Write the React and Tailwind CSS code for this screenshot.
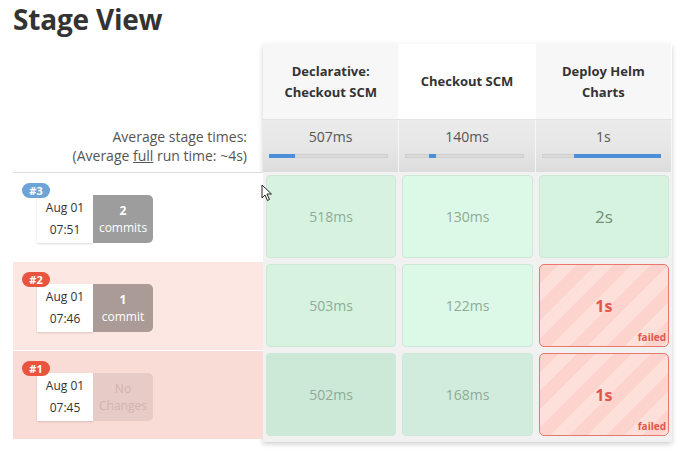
import React from 'react';

const stages = [
  { name: ['Declarative:', 'Checkout SCM'], avg: '507ms', bar: { left: 0, width: 22 }, head: 'bg-[#f7f7f7]' },
  { name: ['Checkout SCM'], avg: '140ms', bar: { left: 20, width: 6 }, head: 'bg-white' },
  { name: ['Deploy Helm', 'Charts'], avg: '1s', bar: { left: 27, width: 73 }, head: 'bg-[#f7f7f7]' },
];

const builds = [
  {
    id: '#3',
    badge: 'bg-[#6da3d6]',
    rowBg: 'bg-white border-t border-[#dcdcdc]',
    date: 'Aug 01',
    time: '07:51',
    commits: ['2', 'commits'],
    commitBox: 'bg-[#9d9d9d] text-white',
    cells: [
      { t: '518ms', cls: 'bg-[#d7f3e0]' },
      { t: '130ms', cls: 'bg-[#dcf8e6]' },
      { t: '2s', cls: 'bg-[#d6f3e0]', big: true },
    ],
  },
  {
    id: '#2',
    badge: 'bg-[#e9543e]',
    rowBg: 'bg-[#fde7e2] border-t border-white',
    date: 'Aug 01',
    time: '07:46',
    commits: ['1', 'commit'],
    commitBox: 'bg-[#ab9b96] text-white',
    cells: [
      { t: '503ms', cls: 'bg-[#d7f3e0]' },
      { t: '122ms', cls: 'bg-[#dcf8e6]' },
      { t: '1s', failed: true },
    ],
  },
  {
    id: '#1',
    badge: 'bg-[#e9543e]',
    rowBg: 'bg-[#fadcd6] border-t border-white',
    date: 'Aug 01',
    time: '07:45',
    commits: ['No', 'Changes'],
    commitBox: 'bg-[#e6cbc6] text-[#d3b4ae]',
    cells: [
      { t: '502ms', cls: 'bg-[#cce8d7]' },
      { t: '168ms', cls: 'bg-[#d1ecdc]' },
      { t: '1s', failed: true },
    ],
  },
];

function BuildRow({ b }) {
  return (
    <div className={`relative h-[89px] ${b.rowBg}`}>
      <div className={`absolute left-[9px] top-[10px] z-10 h-[15px] w-[28px] rounded-full ${b.badge} text-[11px] font-bold leading-[15px] text-white text-center`}>
        {b.id}
      </div>
      <div className="absolute left-[24px] top-[22px] flex h-[48px]">
        <div className="flex w-[56px] flex-col items-center justify-around bg-white py-[2px] text-[12px] text-[#333] shadow-[0_1px_2px_rgba(0,0,0,0.15)]">
          <span>{b.date}</span>
          <span>{b.time}</span>
        </div>
        <div className={`flex w-[60px] flex-col items-center justify-center rounded-r-[5px] text-[12px] leading-[17px] ${b.commitBox}`}>
          <span className={b.commits[0] === 'No' ? '' : 'font-bold'}>{b.commits[0]}</span>
          <span>{b.commits[1]}</span>
        </div>
      </div>
    </div>
  );
}

function Cell({ c }) {
  if (c.failed) {
    return (
      <div className="relative m-[3px] flex items-center justify-center rounded-[5px] border border-[#e8786d] bg-[repeating-linear-gradient(135deg,#fdd3cd_0px,#fdd3cd_13px,#fee0db_13px,#fee0db_26px)]">
        <span className="text-[16px] font-bold text-[#e2574b]">{c.t}</span>
        <span className="absolute bottom-[1px] right-[2px] text-[10px] font-bold text-[#e2574b]">failed</span>
      </div>
    );
  }
  return (
    <div className={`m-[3px] flex items-center justify-center rounded-[4px] border border-[#cbe9d5] ${c.cls}`}>
      <span className={c.big ? 'text-[17px] text-[#718f7b]' : 'text-[14px] text-[#8eab97]'}>{c.t}</span>
    </div>
  );
}

export default function App() {
  return (
    <div className="relative h-[471px] w-[700px] overflow-hidden bg-white pl-[13px] font-['Open_Sans',sans-serif] text-[#333]">
      <h1 className="h-[44px] text-[28px] font-bold leading-[38px] tracking-[-0.2px] text-[#333]">Stage View</h1>
      <div className="flex">
        <div className="w-[250px]">
          <div className="h-[75px]" />
          <div className="flex h-[53px] flex-col items-end justify-center pr-[16px] text-[14px] leading-[19px] text-[#555]">
            <span>Average stage times:</span>
            <span>
              (Average <span className="underline">full</span> run time: ~4s)
            </span>
          </div>
          {builds.map((b) => (
            <BuildRow key={b.id} b={b} />
          ))}
        </div>
        <div className="w-[409px] bg-[#f1f1f1] pb-[3px] shadow-[0_2px_5px_rgba(0,0,0,0.2)]">
          <div className="grid h-[75px] grid-cols-3">
            {stages.map((s) => (
              <div key={s.avg} className={`flex flex-col items-center justify-center border-r border-white text-[13px] font-bold leading-[21px] text-[#333] ${s.head}`}>
                {s.name.map((n) => (
                  <span key={n}>{n}</span>
                ))}
              </div>
            ))}
          </div>
          <div className="grid h-[53px] grid-cols-3 border-t border-[#e4e4e4]">
            {stages.map((s) => (
              <div key={s.avg} className="flex flex-col items-center border-r border-[#f6f6f6] bg-gradient-to-b from-[#ebebeb] via-[#e7e7e7] to-[#dcdcdc] pt-[8px]">
                <span className="text-[14px] leading-[18px] text-[#555]">{s.avg}</span>
                <div className="relative mt-[8px] ml-[6px] h-[4px] w-[119px] self-start bg-[#dadada] shadow-[inset_0_0_0_1px_#cfcfcf]">
                  <div
                    className="absolute top-0 h-[4px] bg-[#4a8fd8]"
                    style={{ left: `${s.bar.left}%`, width: `${s.bar.width}%` }}
                  />
                </div>
              </div>
            ))}
          </div>
          {builds.map((b) => (
            <div key={b.id} className="grid h-[89px] grid-cols-3">
              {b.cells.map((c, i) => (
                <Cell key={i} c={c} />
              ))}
            </div>
          ))}
        </div>
      </div>
      {/* mouse pointer captured in the screenshot */}
      <svg className="absolute left-[261px] top-[184px]" width="12" height="18" viewBox="0 0 12 18">
        <path d="M1 1 L1 14 L4 11 L6.5 16.5 L8.5 15.5 L6 10 L10.5 10 Z" fill="white" stroke="#222" strokeWidth="1" strokeLinejoin="round" />
      </svg>
    </div>
  );
}
